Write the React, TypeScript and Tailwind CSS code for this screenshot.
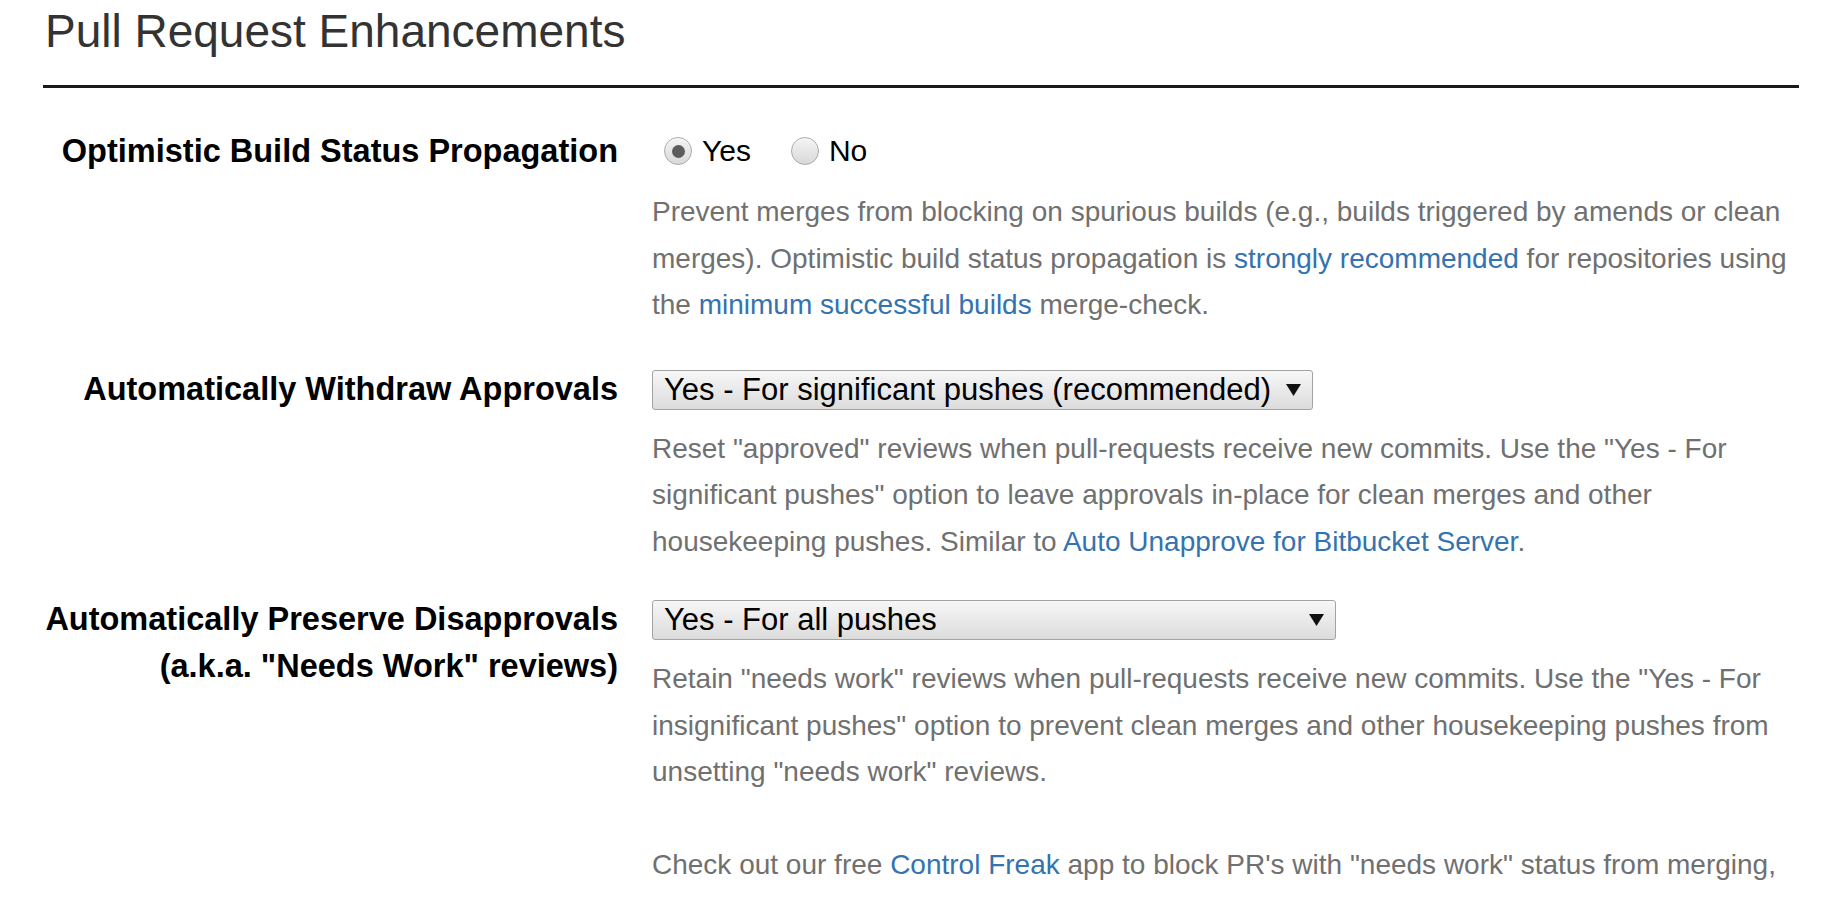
import React from "react";

function Radio({ checked, label }: { checked?: boolean; label: string }) {
  return (
    <label className="flex items-center gap-[10px]">
      <span className="flex h-[28px] w-[28px] items-center justify-center rounded-full border border-[#a9a9a9] bg-gradient-to-b from-[#f4f4f4] to-[#d9d9d9] shadow-[inset_0_1px_1px_rgba(255,255,255,0.8)]">
        {checked && <span className="h-[13px] w-[13px] rounded-full bg-[#5c5c5c]" />}
      </span>
      <span className="text-[30px] leading-[40px] text-black">{label}</span>
    </label>
  );
}

function FakeSelect({ value, width }: { value: string; width: string }) {
  return (
    <div
      className={`${width} mt-[4px] flex h-[40px] items-center justify-between rounded-[3px] border border-[#a3a3a3] bg-gradient-to-b from-[#f7f7f7] to-[#dcdcdc] pl-[11px] pr-[11px]`}
    >
      <span className="text-[31px] leading-[38px] text-black">{value}</span>
      <svg width="15" height="12" viewBox="0 0 15 12" className="shrink-0">
        <path d="M0 0 H15 L7.5 12 Z" fill="#111" />
      </svg>
    </div>
  );
}

const A = ({ children }: { children: React.ReactNode }) => (
  <a href="#" className="text-[#3572b0]">
    {children}
  </a>
);

export default function App() {
  return (
    <div className="min-h-screen bg-white font-['Liberation_Sans',Arial,sans-serif]">
      <div className="pl-[43px] pr-[41px]">
        <h2 className="pl-[2px] pt-[5px] text-[46px] font-normal leading-[53px] text-[#333]">
          Pull Request Enhancements
        </h2>
        <div className="mt-[27px] border-t-[3px] border-[#1a1a1a]" />

        {/* optimistic build status */}
        <div className="mt-[40px] grid grid-cols-[575px_1fr] gap-x-[34px]">
          <div className="text-right text-[32.5px] font-bold leading-[47px] text-black">
            Optimistic Build Status Propagation
          </div>
          <div>
            <div className="mt-[3px] flex h-[40px] items-center gap-[40px] pl-[12px]">
              <Radio checked label="Yes" />
              <Radio label="No" />
            </div>
            <p className="mt-[18px] text-[28px] leading-[46.5px] text-[#707070]">
              Prevent merges from blocking on spurious builds (e.g., builds triggered by amends or clean
              merges). Optimistic build status propagation is <A>strongly recommended</A> for repositories
              using the <A>minimum successful builds</A> merge-check.
            </p>
          </div>
        </div>

        {/* withdraw approvals */}
        <div className="mt-[37px] grid grid-cols-[575px_1fr] gap-x-[34px]">
          <div className="text-right text-[32.5px] font-bold leading-[47px] text-black">
            Automatically Withdraw Approvals
          </div>
          <div>
            <FakeSelect width="w-[661px]" value="Yes - For significant pushes (recommended)" />
            <p className="mt-[16px] text-[28px] leading-[46.5px] text-[#707070]">
              Reset "approved" reviews when pull-requests receive new commits. Use the "Yes - For
              significant pushes" option to leave approvals in-place for clean merges and other
              housekeeping pushes. Similar to <A>Auto Unapprove for Bitbucket Server</A>.
            </p>
          </div>
        </div>

        {/* preserve disapprovals */}
        <div className="mt-[31px] grid grid-cols-[575px_1fr] gap-x-[34px]">
          <div className="text-right text-[32.5px] font-bold leading-[47px] text-black">
            Automatically Preserve Disapprovals
            <br />
            (a.k.a. "Needs Work" reviews)
          </div>
          <div>
            <FakeSelect width="w-[684px]" value="Yes - For all pushes" />
            <p className="mt-[16px] text-[28px] leading-[46.5px] text-[#707070]">
              Retain "needs work" reviews when pull-requests receive new commits. Use the "Yes - For
              insignificant pushes" option to prevent clean merges and other housekeeping pushes from
              unsetting "needs work" reviews.
            </p>
            <p className="mt-[46.5px] text-[28px] leading-[46.5px] text-[#707070]">
              Check out our free <A>Control Freak</A> app to block PR's with "needs work" status from
              merging,
            </p>
          </div>
        </div>
      </div>
    </div>
  );
}
